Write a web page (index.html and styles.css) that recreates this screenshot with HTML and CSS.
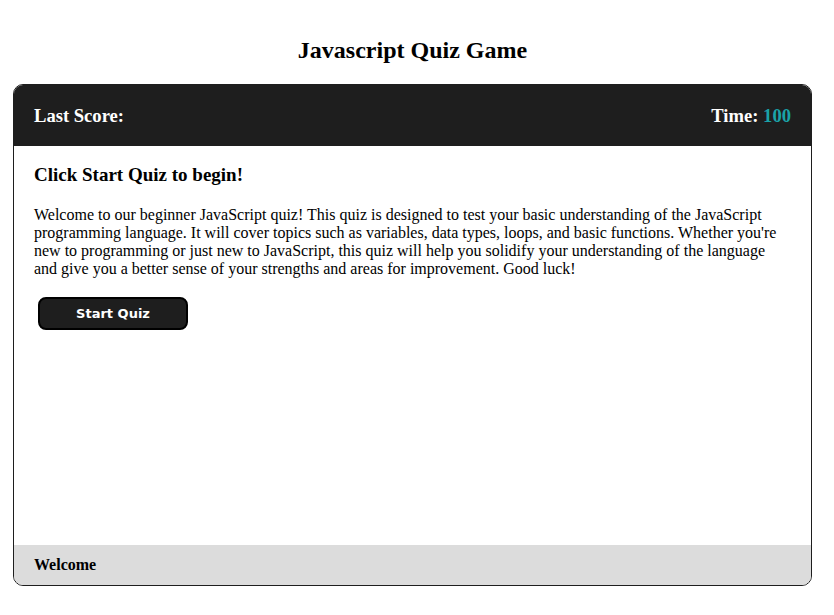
FILE: index.html
```html
<!DOCTYPE html>
<html>
<head>
<meta charset="utf-8">
<link rel="stylesheet" href="styles.css">
</head>
<body>
<div class="page">
  <h1 class="title">Javascript Quiz Game</h1>
  <div class="card">
    <div class="card-head">
      <span class="score">Last Score:</span>
      <span class="time">Time: <span class="time-val">100</span></span>
    </div>
    <div class="card-body">
      <h2 class="prompt">Click Start Quiz to begin!</h2>
      <p class="intro">Welcome to our beginner JavaScript quiz! This quiz is designed to test your basic understanding of the JavaScript programming language. It will cover topics such as variables, data types, loops, and basic functions. Whether you're new to programming or just new to JavaScript, this quiz will help you solidify your understanding of the language and give you a better sense of your strengths and areas for improvement. Good luck!</p>
      <button class="start">Start Quiz</button>
    </div>
    <div class="card-foot">Welcome</div>
  </div>
</div>
</body>
</html>
```
FILE: styles.css
```css
html, body {
  margin: 0;
  padding: 0;
  background: #fff;
}
body {
  font-family: "Liberation Serif", "Times New Roman", serif;
  color: #000;
}
.page {
  width: 799px;
  margin-left: 13px;
  padding-top: 36px;
}
.title {
  margin: 0 0 20px;
  text-align: center;
  font-size: 24px;
  line-height: 28px;
  font-weight: bold;
}
.card {
  border: 1px solid #1e1e1e;
  border-radius: 10px;
  overflow: hidden;
  height: 500px;
  display: flex;
  flex-direction: column;
}
.card-head {
  background: #1e1e1e;
  color: #fff;
  height: 61px;
  display: flex;
  align-items: center;
  justify-content: space-between;
  padding: 0 20px;
  font-weight: bold;
  font-size: 18.6px;
}
.time-val {
  color: #1aa3a8;
}
.card-body {
  flex: 1;
  padding: 18px 20px 0;
}
.prompt {
  margin: 0 0 20px;
  font-size: 19px;
  line-height: 22px;
  font-weight: bold;
}
.intro {
  margin: 0 0 19px;
  font-size: 16px;
  line-height: 18px;
}
.start {
  display: block;
  margin-left: 4px;
  width: 150px;
  height: 33px;
  background: #1e1e1e;
  border: 2px solid #000;
  border-radius: 8px;
  color: #fff;
  font-family: "DejaVu Sans", Verdana, sans-serif;
  font-weight: bold;
  font-size: 13px;
  cursor: pointer;
}
.card-foot {
  background: #dcdcdc;
  height: 40px;
  display: flex;
  align-items: center;
  padding: 0 20px;
  font-weight: bold;
  font-size: 16px;
}
```
